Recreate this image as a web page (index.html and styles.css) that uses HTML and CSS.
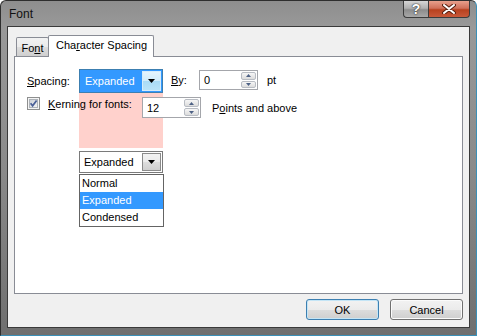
FILE: index.html
```html
<!DOCTYPE html>
<html lang="en">
<head>
  <meta charset="UTF-8" />
  <title>Font</title>
  <link rel="stylesheet" href="styles.css">
</head>
<body>
  <div class="window">
    <div class="titlebar">
      <span class="title">Font</span>
      <div class="caption">
        <div class="cap help">?</div>
        <div class="cap close">
          <svg width="14" height="10" viewBox="0 0 14 10">
            <path d="M2 1 L12 9 M12 1 L2 9" stroke="#5a2010" stroke-width="4" stroke-linecap="round"/>
            <path d="M2 1 L12 9 M12 1 L2 9" stroke="#ffffff" stroke-width="2" stroke-linecap="round"/>
          </svg>
        </div>
      </div>
    </div>

    <div class="client">
      <div class="tabs">
        <div class="tab">Fo<u>n</u>t</div>
        <div class="tab active">Cha<u>r</u>acter Spacing</div>
      </div>

      <div class="panel">
        <div class="form">
          <span class="lbl spacing-lbl"><u>S</u>pacing:</span>

          <div class="combo combo-top focused">
            <span class="combo-text">Expanded</span>
            <span class="drop-btn">
              <svg width="7" height="4" viewBox="0 0 7 4"><path d="M0 0 H7 L3.5 4 Z" fill="#000"/></svg>
            </span>
          </div>

          <div class="by-group">
            <span class="lbl by-lbl"><u>B</u>y:</span>
            <div class="spin">
              <span class="spin-val">0</span>
              <span class="spin-btns">
                <span class="spin-b"><svg width="5" height="3" viewBox="0 0 5 3"><path d="M0 3 H5 L2.5 0 Z" fill="#4d6185"/></svg></span>
                <span class="spin-b"><svg width="5" height="3" viewBox="0 0 5 3"><path d="M0 0 H5 L2.5 3 Z" fill="#4d6185"/></svg></span>
              </span>
            </div>
            <span class="lbl pt">pt</span>
          </div>

          <div class="pink"></div>

          <div class="kerning">
            <div class="check">
              <svg width="13" height="13" viewBox="0 0 13 13">
                <defs>
                  <linearGradient id="cb" x1="0" y1="0" x2="1" y2="1">
                    <stop offset="0" stop-color="#cbcfd5"/>
                    <stop offset="1" stop-color="#f6f6f6"/>
                  </linearGradient>
                </defs>
                <rect x="0.5" y="0.5" width="12" height="12" fill="#f4f4f4" stroke="#8e8f8f"/>
                <rect x="2.5" y="2.5" width="8" height="8" fill="url(#cb)" stroke="#aeb3b9"/>
                <path d="M3.6 6.2 L5.6 8.8 L9.6 3.4" fill="none" stroke="#4a5f97" stroke-width="1.7"/>
              </svg>
              <span class="lbl kern-lbl"><u>K</u>erning for fonts:</span>
            </div>
            <div class="spin">
              <span class="spin-val">12</span>
              <span class="spin-btns">
                <span class="spin-b"><svg width="5" height="3" viewBox="0 0 5 3"><path d="M0 3 H5 L2.5 0 Z" fill="#4d6185"/></svg></span>
                <span class="spin-b"><svg width="5" height="3" viewBox="0 0 5 3"><path d="M0 0 H5 L2.5 3 Z" fill="#4d6185"/></svg></span>
              </span>
            </div>
            <span class="lbl points">P<u>o</u>ints and above</span>
          </div>

          <div class="combo combo-low">
            <span class="combo-text">Expanded</span>
            <span class="drop-btn">
              <svg width="7" height="4" viewBox="0 0 7 4"><path d="M0 0 H7 L3.5 4 Z" fill="#000"/></svg>
            </span>
          </div>

          <ul class="list">
            <li>Normal</li>
            <li class="sel">Expanded</li>
            <li>Condensed</li>
          </ul>
        </div>
      </div>

      <div class="buttons">
        <div class="btn default">OK</div>
        <div class="btn">Cancel</div>
      </div>
    </div>
  </div>
</body>
</html>
```

FILE: styles.css
```css
body {
  margin: 0;
  font-family: "Liberation Sans", Arial, sans-serif;
  font-size: 11px;
  color: #000;
  background: #fff;
}

.window {
  width: 477px;
  height: 336px;
  box-sizing: border-box;
  display: flex;
  flex-direction: column;
  padding: 0 6px 7px 6px;
  background: linear-gradient(180deg, #8e8e8e 0%, #999999 8%, #8a8a8a 50%, #6f6f6f 100%);
  border: 1px solid #2e2e2e;
  border-right-color: #3a8fb7;
  border-bottom-color: #3a8fb7;
  border-radius: 6px 6px 0 0;
}

.titlebar {
  height: 25px;
  display: flex;
  align-items: flex-start;
  justify-content: space-between;
}

.title {
  font-size: 12px;
  margin: 6px 0 0 2px;
  color: #111;
}

.caption {
  display: flex;
}

.cap {
  height: 17px;
  box-sizing: border-box;
  border: 1px solid #3c3c3c;
  border-top: none;
  display: flex;
  align-items: center;
  justify-content: center;
}

.help {
  width: 25px;
  border-radius: 0 0 0 4px;
  border-right: none;
  background: linear-gradient(180deg, #d6d6d6 0%, #b0b0b0 45%, #8c8c8c 55%, #a8a8a8 100%);
  color: #fff;
  font-weight: bold;
  font-size: 14px;
  text-shadow: 0 0 2px #333, 0 0 1px #222;
}

.close {
  width: 42px;
  border-radius: 0 0 4px 0;
  background: linear-gradient(180deg, #e8a08c 0%, #d0705a 45%, #b8411f 55%, #c8593a 100%);
}

.client {
  flex: 1;
  display: flex;
  flex-direction: column;
  background: #f0f0f0;
  border: 1px solid #3a3a3a;
  padding: 8px 6px 7px 6px;
}

.tabs {
  height: 21px;
  display: flex;
  align-items: flex-end;
  padding-left: 2px;
}

.tab {
  height: 19px;
  width: 33px;
  box-sizing: border-box;
  border: 1px solid #898c95;
  border-bottom: none;
  border-radius: 2px 2px 0 0;
  background: linear-gradient(180deg, #f2f2f2 0%, #ebebeb 50%, #dddddd 51%, #cfcfcf 100%);
  display: flex;
  align-items: center;
  justify-content: center;
  padding-top: 2px;
}

.tab.active {
  position: relative;
  height: 22px;
  width: 106px;
  margin-left: -1px;
  margin-bottom: -1px;
  background: #fff;
  padding: 0 0 3px 1px;
}

.panel {
  height: 238px;
  box-sizing: border-box;
  border: 1px solid #898c95;
  background: #fff;
  padding: 12px 0 0 12px;
}

.form {
  display: grid;
  grid-template-columns: 52px 84px 1fr;
  grid-template-rows: 24px 4px 21px 30px 3px 22px auto;
}

.lbl {
  white-space: nowrap;
}

.spacing-lbl {
  grid-column: 1;
  grid-row: 1;
  align-self: center;
}

.combo {
  box-sizing: border-box;
  display: flex;
  align-items: stretch;
  justify-content: space-between;
}

.combo-text {
  display: flex;
  align-items: center;
  padding-left: 4px;
}

.combo-top {
  grid-column: 2;
  grid-row: 1;
  border: 1px solid #3c7fb1;
  background: #3399ff;
  color: #fff;
  padding: 1px;
}

.combo-top .drop-btn {
  width: 17px;
  border: 1px solid #d6ecfa;
  background: linear-gradient(180deg, #e4f4fd 0%, #d0ecfb 50%, #a9dbf6 51%, #b9e3f8 100%);
}

.drop-btn {
  display: flex;
  align-items: center;
  justify-content: center;
}

.combo-low {
  grid-column: 2;
  grid-row: 6;
  border: 1px solid #7a7a7a;
  background: #fff;
  padding: 1px;
}

.combo-low .combo-text {
  padding-left: 3px;
}

.combo-low .drop-btn {
  width: 17px;
  border: 1px solid #8a8a8a;
  background: linear-gradient(180deg, #f2f2f2 0%, #ebebeb 50%, #dddddd 51%, #cfcfcf 100%);
}

.by-group {
  grid-column: 3;
  grid-row: 1;
  display: flex;
  align-items: center;
  align-self: start;
  margin: 1px 0 0 8px;
}

.by-lbl {
  width: 28px;
}

.spin {
  width: 59px;
  height: 20px;
  box-sizing: border-box;
  border: 1px solid #a4a6ab;
  background: #fff;
  display: flex;
  justify-content: space-between;
  padding: 1px;
}

.spin-val {
  display: flex;
  align-items: center;
  padding-left: 3px;
}

.spin-btns {
  width: 15px;
  display: flex;
  flex-direction: column;
  gap: 1px;
}

.spin-b {
  flex: 1;
  border: 1px solid #b8bcc3;
  border-radius: 2px;
  background: linear-gradient(180deg, #f6f6f6 0%, #dcdcdc 100%);
  display: flex;
  align-items: center;
  justify-content: center;
}

.pt {
  margin-left: 9px;
}

.pink {
  grid-column: 2;
  grid-row: 2 / 5;
  background: #ffd1cc;
}

.kerning {
  grid-column: 1 / -1;
  grid-row: 3;
  display: flex;
  align-items: center;
}

.kerning .spin {
  height: 21px;
}

.check {
  width: 115px;
  display: flex;
  align-items: center;
  align-self: start;
}

.check svg {
  display: block;
}

.kern-lbl {
  margin-left: 8px;
}

.points {
  margin-left: 11px;
}

.list {
  grid-column: 2;
  grid-row: 7;
  margin: 1px 0 0 0;
  padding: 0;
  list-style: none;
  width: 85px;
  box-sizing: border-box;
  border: 1px solid #646464;
  background: #fff;
}

.list li {
  height: 17px;
  line-height: 17px;
  padding-left: 2px;
}

.list li.sel {
  background: #3399ff;
  color: #fff;
}

.buttons {
  display: flex;
  justify-content: flex-end;
  gap: 11px;
  margin-top: 5px;
}

.btn {
  width: 73px;
  height: 21px;
  box-sizing: border-box;
  border: 1px solid #707070;
  border-radius: 3px;
  box-shadow: inset 0 0 0 1px #fbfbfb;
  background: linear-gradient(180deg, #f2f2f2 0%, #ebebeb 50%, #dddddd 51%, #cfcfcf 100%);
  display: flex;
  align-items: center;
  justify-content: center;
}

.btn.default {
  border-color: #3c7fb1;
  box-shadow: inset 0 0 0 1px #c4e5f6;
}
```
